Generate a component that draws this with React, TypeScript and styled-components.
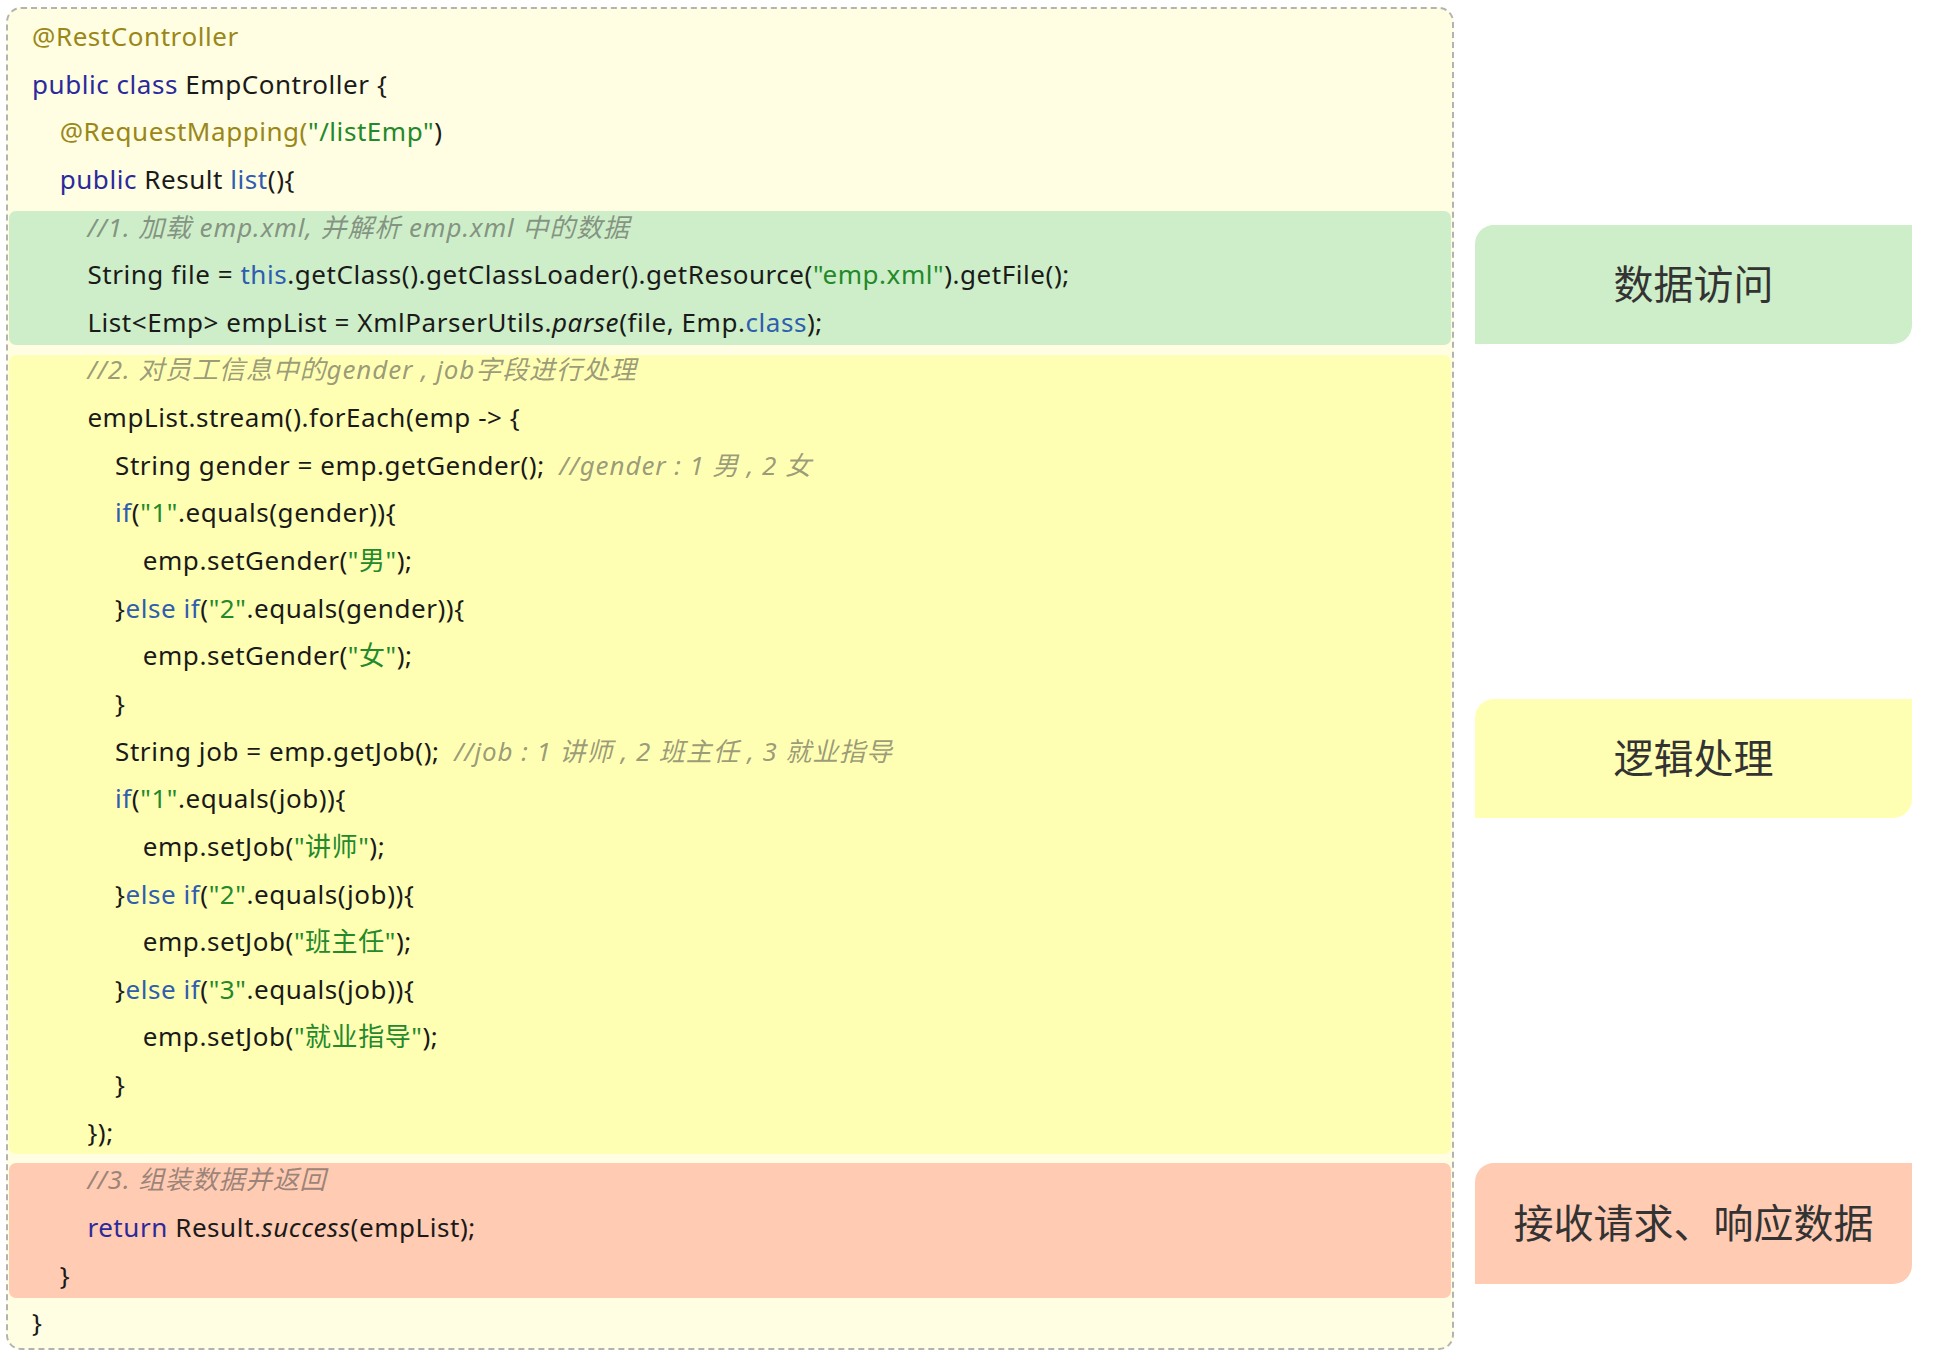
import React from "react";
import styled, { createGlobalStyle } from "styled-components";

const GlobalStyle = createGlobalStyle`
  html, body { margin: 0; padding: 0; background: #ffffff; }
  body { font-family: "Noto Sans", "Noto Sans CJK SC", sans-serif; }
`;

const LINE = 47.65;
const INDENT = 27.7;

const Page = styled.div`
  display: flex;
  align-items: flex-start;
  padding: 7px 0 0 6px;
  gap: 21px;
`;

const CodeBox = styled.div`
  box-sizing: border-box;
  width: 1448px;
  height: 1343px;
  border: 2px dashed #b3b3b3;
  border-radius: 15px;
  background: #fffee2;
  padding: 4px 1px 0 1px;
  display: flex;
  flex-direction: column;
  font-family: "Noto Sans", "Noto Sans CJK SC", sans-serif;
  font-size: 26px;
  letter-spacing: 0.55px;
  color: #1a1a1a;
`;

const Band = styled.div<{ $bg: string; $top: number; $bottom: number }>`
  display: flex;
  flex-direction: column;
  background: ${(p) => p.$bg};
  border-radius: 7px;
  margin-top: ${(p) => p.$top}px;
  margin-bottom: ${(p) => p.$bottom}px;
  & > :first-child { margin-top: ${(p) => -p.$top}px; }
  & > :last-child { margin-bottom: ${(p) => -p.$bottom}px; }
`;

const Line = styled.div<{ $level: number }>`
  flex: none;
  height: ${LINE}px;
  line-height: ${LINE}px;
  white-space: pre;
  padding-left: ${(p) => 23 + p.$level * INDENT}px;
`;

const Ann = styled.span`color: #9a8718;`;
const Kw = styled.span`color: #2b2a9c;`;
const Bl = styled.span`color: #2f5db0;`;
const Str = styled.span`color: #23892b;`;
const Cm = styled.span`
  color: rgba(70, 70, 70, 0.55);
  font-style: italic;
  letter-spacing: 0.9px;
`;
const It = styled.span`font-style: italic;`;

const LabelCol = styled.div`
  display: flex;
  flex-direction: column;
  width: 437px;
`;

const Label = styled.div<{ $bg: string; $mt: number; $h: number }>`
  box-sizing: border-box;
  height: ${(p) => p.$h}px;
  margin-top: ${(p) => p.$mt}px;
  padding-bottom: 6px;
  background: ${(p) => p.$bg};
  border-radius: 19px 0 19px 0;
  display: flex;
  align-items: center;
  justify-content: center;
  font-family: "Noto Sans CJK SC", "Noto Sans", sans-serif;
  font-size: 40px;
  color: #333333;
`;

const GREEN = "#cdeec8";
const YELLOW = "#ffffb4";
const SALMON = "#ffcbb3";

export default function App() {
  return (
    <>
      <GlobalStyle />
      <Page>
        <CodeBox>
          <Line $level={0}><Ann>@RestController</Ann></Line>
          <Line $level={0}><Kw>public class</Kw> EmpController {"{"}</Line>
          <Line $level={1}><Ann>@RequestMapping(</Ann><Str>"/listEmp"</Str>)</Line>
          <Line $level={1}><Kw>public</Kw> Result <Bl>list</Bl>(){"{"}</Line>
          <Band $bg={GREEN} $top={7} $bottom={1}>
            <Line $level={2}><Cm>//1. 加载 emp.xml, 并解析 emp.xml 中的数据</Cm></Line>
            <Line $level={2}>String file = <Bl>this</Bl>.getClass().getClassLoader().getResource(<Str>"emp.xml"</Str>).getFile();</Line>
            <Line $level={2}>List&lt;Emp&gt; empList = XmlParserUtils.<It>parse</It>(file, Emp.<Bl>class</Bl>);</Line>
          </Band>
          <Band $bg={YELLOW} $top={9} $bottom={2}>
            <Line $level={2}><Cm>//2. 对员工信息中的gender , job字段进行处理</Cm></Line>
            <Line $level={2}>empList.stream().forEach(emp -&gt; {"{"}</Line>
            <Line $level={3}>String gender = emp.getGender();  <Cm>//gender : 1 男 , 2 女</Cm></Line>
            <Line $level={3}><Bl>if</Bl>(<Str>"1"</Str>.equals(gender)){"{"}</Line>
            <Line $level={4}>emp.setGender(<Str>"男"</Str>);</Line>
            <Line $level={3}>{"}"}<Bl>else if</Bl>(<Str>"2"</Str>.equals(gender)){"{"}</Line>
            <Line $level={4}>emp.setGender(<Str>"女"</Str>);</Line>
            <Line $level={3}>{"}"}</Line>
            <Line $level={3}>String job = emp.getJob();  <Cm>//job : 1 讲师 , 2 班主任 , 3 就业指导</Cm></Line>
            <Line $level={3}><Bl>if</Bl>(<Str>"1"</Str>.equals(job)){"{"}</Line>
            <Line $level={4}>emp.setJob(<Str>"讲师"</Str>);</Line>
            <Line $level={3}>{"}"}<Bl>else if</Bl>(<Str>"2"</Str>.equals(job)){"{"}</Line>
            <Line $level={4}>emp.setJob(<Str>"班主任"</Str>);</Line>
            <Line $level={3}>{"}"}<Bl>else if</Bl>(<Str>"3"</Str>.equals(job)){"{"}</Line>
            <Line $level={4}>emp.setJob(<Str>"就业指导"</Str>);</Line>
            <Line $level={3}>{"}"}</Line>
            <Line $level={2}>{"});"}</Line>
          </Band>
          <Band $bg={SALMON} $top={7} $bottom={1}>
            <Line $level={2}><Cm>//3. 组装数据并返回</Cm></Line>
            <Line $level={2}><Kw>return</Kw> Result.<It>success</It>(empList);</Line>
            <Line $level={1}>{"}"}</Line>
          </Band>
          <Line $level={0}>{"}"}</Line>
        </CodeBox>
        <LabelCol>
          <Label $bg={GREEN} $mt={218} $h={119}>数据访问</Label>
          <Label $bg={YELLOW} $mt={355} $h={119}>逻辑处理</Label>
          <Label $bg={SALMON} $mt={345} $h={121}>接收请求、响应数据</Label>
        </LabelCol>
      </Page>
    </>
  );
}
